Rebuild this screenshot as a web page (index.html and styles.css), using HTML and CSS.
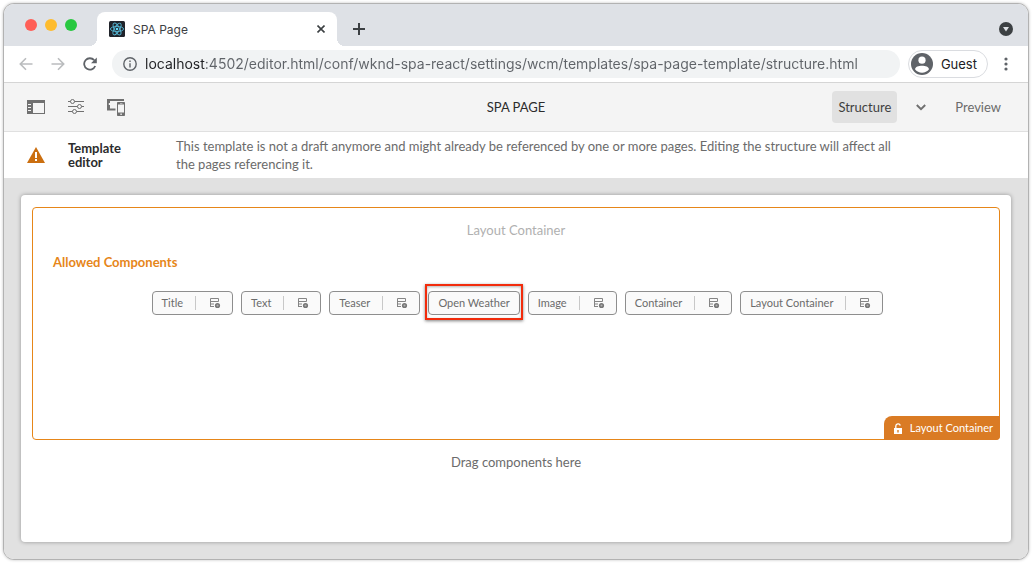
FILE: index.html
```html
<!DOCTYPE html>
<html lang="en">
<head>
<meta charset="utf-8">
<meta name="viewport" content="width=device-width, initial-scale=1">
<title>SPA Page</title>
<link rel="stylesheet" href="styles.css">
</head>
<body>
<svg class="sprite" width="0" height="0" aria-hidden="true">
  <symbol id="policy" viewBox="0 0 12 12">
    <path d="M1.5 10V1.5H9.5V4.5H1.5M1.5 7H5M1 9.5H5" fill="none" stroke="#858585"/>
    <circle cx="8.5" cy="8.5" r="1.8" fill="#b0b0b0" stroke="#777" stroke-width="1.6"/>
  </symbol>
</svg>
<div class="window">
  <header class="tab-strip">
    <div class="lights"><span class="light red"></span><span class="light yellow"></span><span class="light green"></span></div>
    <div class="tab">
      <svg class="favicon" width="16" height="16" viewBox="0 0 16 16" aria-hidden="true">
        <rect width="16" height="16" rx="1.5" fill="#20232a"/>
        <g fill="none" stroke="#54b5d2" stroke-width=".9">
          <ellipse cx="8" cy="8" rx="6.6" ry="2.6"/>
          <ellipse cx="8" cy="8" rx="6.6" ry="2.6" transform="rotate(60 8 8)"/>
          <ellipse cx="8" cy="8" rx="6.6" ry="2.6" transform="rotate(120 8 8)"/>
        </g>
        <circle cx="8" cy="8" r="1.3" fill="#61dafb"/>
      </svg>
      <span class="tab-title">SPA Page</span>
      <button class="icon-btn" aria-label="Close tab"><svg width="8" height="8" viewBox="0 0 8 8"><path d="M.5 .5 7.5 7.5M7.5 .5 .5 7.5" stroke="#3c4043" stroke-width="1.6"/></svg></button>
    </div>
    <button class="icon-btn new-tab" aria-label="New tab"><svg width="12" height="12" viewBox="0 0 12 12"><path d="M6 0V12M0 6H12" stroke="#3c4043" stroke-width="2"/></svg></button>
    <button class="icon-btn tab-search" aria-label="Search tabs"><svg width="14" height="14" viewBox="0 0 14 14"><circle cx="7" cy="7" r="7" fill="#3c4043"/><path d="M4 5H10L7 9.4Z" fill="#dee1e6"/></svg></button>
  </header>

  <div class="toolbar">
    <div class="nav">
      <button class="icon-btn" aria-label="Back"><svg width="14" height="14" viewBox="0 0 14 14"><path d="M13.5 7H1.5M7 1.3 1.3 7 7 12.7" fill="none" stroke="#babcbe" stroke-width="1.6"/></svg></button>
      <button class="icon-btn" aria-label="Forward"><svg width="14" height="14" viewBox="0 0 14 14"><path d="M.5 7H12.5M7 1.3 12.7 7 7 12.7" fill="none" stroke="#babcbe" stroke-width="1.6"/></svg></button>
      <button class="icon-btn" aria-label="Reload"><svg width="14" height="14" viewBox="0 0 14 14"><path d="M12.2 9A5.7 5.7 0 1 1 11.2 3.2" fill="none" stroke="#5f6368" stroke-width="1.8"/><path d="M13.8 .4V6.2H8Z" fill="#5f6368"/></svg></button>
    </div>
    <div class="address">
      <svg width="14" height="14" viewBox="0 0 14 14" aria-hidden="true"><circle cx="7" cy="7" r="6.2" fill="none" stroke="#5f6368" stroke-width="1.4"/><path d="M7 6.2V10.4M7 3.6V5" stroke="#5f6368" stroke-width="1.4"/></svg>
      <input class="url" type="text" aria-label="Address" value="localhost:4502/editor.html/conf/wknd-spa-react/settings/wcm/templates/spa-page-template/structure.html">
    </div>
    <button class="profile">
      <svg width="22" height="22" viewBox="0 0 22 22" aria-hidden="true"><circle cx="11" cy="11" r="11" fill="#5f6368"/><circle cx="11" cy="7.2" r="3.6" fill="#fff"/><path d="M4 16.2C4.4 11.6 17.6 11.6 18 16.2A8.8 8.8 0 0 1 4 16.2Z" fill="#fff"/></svg>
      Guest
    </button>
    <button class="icon-btn more" aria-label="More"><svg width="4" height="14" viewBox="0 0 4 14"><g fill="#5f6368"><circle cx="2" cy="2" r="1.6"/><circle cx="2" cy="7" r="1.6"/><circle cx="2" cy="12" r="1.6"/></g></svg></button>
  </div>

  <div class="editor-bar">
    <div class="tools">
      <button class="icon-btn" aria-label="Toggle side panel"><svg width="18" height="14" viewBox="0 0 18 14"><path d="M0 0H18V14H0ZM6 3V13H17V3ZM1 4V5H4V4ZM1 7V8H4V7ZM1 10V11H4V10Z" fill="#707070" fill-rule="evenodd"/></svg></button>
      <button class="icon-btn" aria-label="Page information"><svg width="16" height="16" viewBox="0 0 16 16"><path d="M0 2.5H2.5M6.5 2.5H16M0 7.5H9.5M13.5 7.5H16M0 12.5H4.5M8.5 12.5H16" stroke="#707070"/><g fill="none" stroke="#707070"><circle cx="4.5" cy="2.5" r="2"/><circle cx="11.5" cy="7.5" r="2"/><circle cx="6.5" cy="12.5" r="2"/></g></svg></button>
      <button class="icon-btn" aria-label="Emulator"><svg width="18" height="18" viewBox="0 0 18 18"><path d="M0 1H17V3H3V5H1.8V7H3V10.5H8.5V12.5H0Z" fill="#707070"/><path d="M11 4H17.2Q18 4 18 4.8V17.2Q18 18 17.2 18H10.8Q10 18 10 17.2V4.8Q10 4 10.8 4ZM11 6.5V14.5H17V6.5ZM13 5V5.6H15.5V5ZM13.4 15.6V17H14.8V15.6Z" fill="#707070" fill-rule="evenodd"/></svg></button>
    </div>
    <h1 class="page-name">SPA PAGE</h1>
    <div class="modes">
      <button class="mode active">Structure</button>
      <button class="icon-btn" aria-label="Choose mode"><svg width="10" height="7" viewBox="0 0 10 7"><path d="M.8 1 5 5.2 9.2 1" fill="none" stroke="#707070" stroke-width="2"/></svg></button>
      <button class="mode preview">Preview</button>
    </div>
  </div>

  <div class="notice">
    <svg width="18" height="16" viewBox="0 0 18 16" aria-hidden="true"><path d="M9 0 18 16H0Z" fill="#cb6f10"/><path d="M9 5V11M9 12V14" stroke="#fff" stroke-width="2"/></svg>
    <strong class="notice-title">Template editor</strong>
    <p class="notice-text">This template is not a draft anymore and might already be referenced by one or more pages. Editing the structure will affect all the pages referencing it.</p>
  </div>

  <main class="canvas">
    <div class="paper">
      <section class="container">
        <div class="container-name">Layout Container</div>
        <h2 class="allowed">Allowed Components</h2>
        <ul class="chips">
          <li class="chip"><span>Title</span><button class="policy" aria-label="Title policy"><svg width="12" height="12"><use href="#policy"/></svg></button></li>
          <li class="chip"><span>Text</span><button class="policy" aria-label="Text policy"><svg width="12" height="12"><use href="#policy"/></svg></button></li>
          <li class="chip"><span>Teaser</span><button class="policy" aria-label="Teaser policy"><svg width="12" height="12"><use href="#policy"/></svg></button></li>
          <li class="chip marked"><span>Open Weather</span></li>
          <li class="chip"><span>Image</span><button class="policy" aria-label="Image policy"><svg width="12" height="12"><use href="#policy"/></svg></button></li>
          <li class="chip"><span>Container</span><button class="policy" aria-label="Container policy"><svg width="12" height="12"><use href="#policy"/></svg></button></li>
          <li class="chip"><span>Layout Container</span><button class="policy" aria-label="Layout Container policy"><svg width="12" height="12"><use href="#policy"/></svg></button></li>
        </ul>
        <button class="badge"><svg width="8" height="11" viewBox="0 0 8 11" aria-hidden="true"><path d="M1.8 5V3A2.3 2.3 0 0 1 6.3 2.5" fill="none" stroke="#fff" stroke-width="1.3"/><path d="M0 5H8V11H0ZM3.3 7V9.5H4.7V7Z" fill="#fff" fill-rule="evenodd"/></svg><span>Layout Container</span></button>
      </section>
      <p class="drop">Drag components here</p>
    </div>
  </main>
</div>
</body>
</html>
```
FILE: styles.css
```css
* { box-sizing: border-box; }
body {
  margin: 0;
  padding: 3px;
  min-height: 100vh;
  display: flex;
  background: #fff;
  font-family: Lato, "Noto Sans", sans-serif;
  font-size: 13px;
  color: #6b6b6b;
}
button, input { font: inherit; color: inherit; border: 0; padding: 0; background: none; }
h1, h2, p, ul { margin: 0; padding: 0; }
svg { display: block; flex: none; }
.sprite { position: absolute; }
.icon-btn { display: flex; flex: none; align-items: center; justify-content: center; }

.window {
  flex: 1;
  display: flex;
  flex-direction: column;
  border: 1px solid #b2b2b2;
  border-radius: 11px;
  box-shadow: 0 0 3px rgba(0, 0, 0, .25);
  overflow: hidden;
  background: #fff;
}

.tab-strip { display: flex; align-items: flex-end; height: 42px; background: #dee1e6; padding: 0 15px 0 21px; font-family: Inter, sans-serif; }
.lights { display: flex; gap: 8px; align-self: center; margin-right: 20px; }
.light { width: 12px; height: 12px; border-radius: 50%; }
.red { background: #ff5f57; }
.yellow { background: #febc2e; }
.green { background: #28c840; }
.tab { position: relative; display: flex; align-items: center; width: 240px; height: 34px; padding: 0 12px; background: #fff; border-radius: 8px 8px 0 0; color: #3c4043; font-size: 12px; }
.tab::before, .tab::after { content: ""; position: absolute; bottom: 0; width: 8px; height: 8px; }
.tab::before { right: 100%; background: radial-gradient(circle at 0 0, transparent 8px, #fff 8px); }
.tab::after { left: 100%; background: radial-gradient(circle at 100% 0, transparent 8px, #fff 8px); }
.tab-title { flex: 1; margin-left: 8px; }
.new-tab { height: 34px; margin-left: 16px; }
.tab-search { height: 34px; margin-left: auto; }

.toolbar { display: flex; align-items: center; height: 37px; padding: 0 20px 0 15px; border-bottom: 1px solid #d5d5d5; font-family: Inter, sans-serif; }
.nav { display: flex; gap: 18px; margin-right: 15px; }
.address { flex: 1; display: flex; align-items: center; gap: 8px; height: 28px; padding: 0 12px 0 11px; border-radius: 14px; background: #f1f3f4; }
.url {
  flex: 1;
  min-width: 0;
  font-size: 14px;
  line-height: 20px;
  background: linear-gradient(to right, #202124 60px, #5f6368 60px);
  -webkit-background-clip: text;
  background-clip: text;
  -webkit-text-fill-color: transparent;
}
.profile { display: flex; align-items: center; gap: 8px; height: 28px; margin-left: 8px; padding: 0 10px 0 2px; border: 1px solid #dadce0; border-radius: 14px; color: #202124; font-size: 13px; }
.more { margin-left: 16px; }

.editor-bar { display: grid; grid-template-columns: 1fr auto 1fr; align-items: center; height: 49px; padding: 0 23px; background: #f4f4f4; border-bottom: 1px solid #e0e0e0; }
.tools { display: flex; align-items: center; gap: 23px; }
.page-name { font-size: 13px; font-weight: 400; color: #2c2c2c; }
.modes { display: flex; align-items: center; justify-content: flex-end; gap: 19px; padding-right: 4px; }
.mode { height: 32px; }
.preview { margin-left: 10px; }
.active { padding: 0 6px; border-radius: 4px; background: #e1e1e1; color: #3f3f3f; }

.notice { display: flex; align-items: center; min-height: 46px; padding: 0 120px 0 23px; }
.notice-title { width: 80px; margin: 0 28px 0 23px; line-height: 14px; color: #2c2c2c; }
.notice-text { flex: 1; line-height: 18px; }

.canvas { flex: 1; display: flex; padding: 17px; background: #e1e1e1; }
.paper { flex: 1; padding: 12px 11px; background: #fff; border-radius: 4px; box-shadow: 0 0 4px rgba(0, 0, 0, .35); }
.container { position: relative; min-height: 233px; padding: 12px 20px; border: 1px solid #e68619; border-radius: 4px; }
.container-name { line-height: 20px; text-align: center; color: #b0b0b0; }
.allowed { margin: 12px 0 19px; font-size: 13px; line-height: 20px; color: #e68619; }
.chips { display: flex; flex-wrap: wrap; justify-content: center; gap: 8px; padding-left: 3px; list-style: none; }
.chip { position: relative; display: flex; align-items: center; height: 24px; padding: 0 9px; border: 1px solid #8e8e8e; border-radius: 4px; background: #fafafa; font-size: 11px; }
.chip span, .badge span { padding-bottom: 2px; }
.policy { display: flex; align-items: center; height: 14px; margin: 0 2px 0 12px; padding-left: 13px; border-left: 1px solid #c8c8c8; }
.marked::after { content: ""; position: absolute; inset: -8px -4px -6px; border: 2px solid #f22c0c; box-shadow: 0 1px 3px rgba(0, 0, 0, .5), inset 0 1px 3px rgba(0, 0, 0, .3); }
.badge { position: absolute; right: -1px; bottom: -1px; display: flex; align-items: center; gap: 8px; height: 24px; padding: 0 7px 0 10px; border-radius: 8px 0 4px 0; background: #da7b24; color: #fff; font-size: 11px; }
.drop { margin-top: 12px; line-height: 20px; text-align: center; }
```
